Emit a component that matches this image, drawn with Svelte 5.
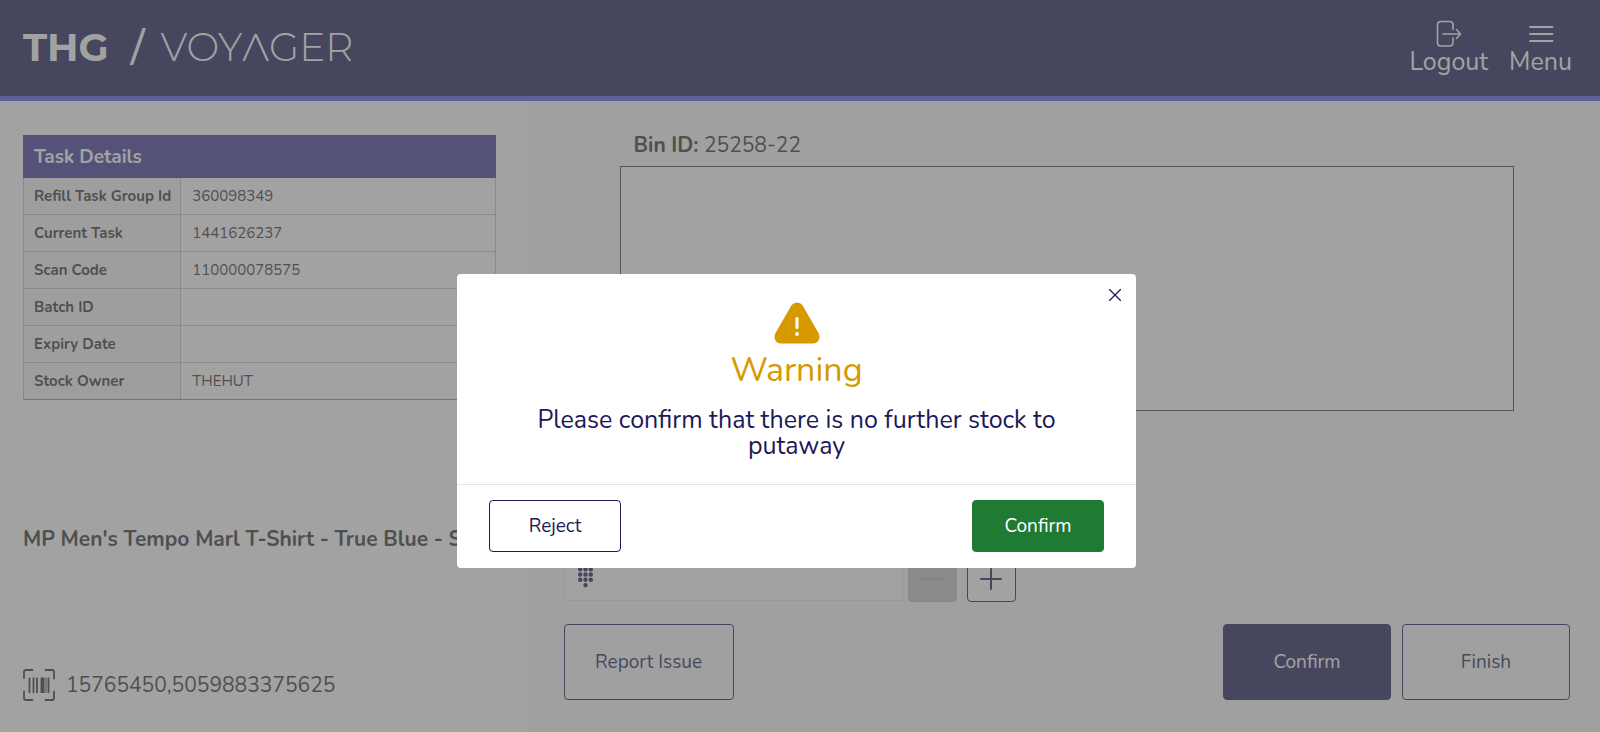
<script lang="ts">
  type Detail = { label: string; value: string };

  const details: Detail[] = [
    { label: 'Refill Task Group Id', value: '360098349' },
    { label: 'Current Task', value: '1441626237' },
    { label: 'Scan Code', value: '110000078575' },
    { label: 'Batch ID', value: '' },
    { label: 'Expiry Date', value: '' },
    { label: 'Stock Owner', value: 'THEHUT' }
  ];

  const binId = '25258-22';
  let quantity = $state('');
  let showWarning = $state(true);

  const keypadDots = [0, 1, 2, 3].flatMap(row => [0, 1, 2].map(col => ({ x: 2.2 + col * 5.3, y: 2.2 + row * 5.3, row, col })));

  function step(by: number) {
    quantity = String(Math.max(0, Number(quantity) + by));
  }

  function closeWarning() {
    showWarning = false;
  }
</script>

<div class="page">
  <header>
    <a class="logo" href="/" aria-label="THG / Voyager">
      <span class="brand">THG</span>
      <span class="slash">/</span>
      <span class="product">VOYΛGER</span>
    </a>
    <nav>
      <button class="nav-item">
        <svg width="26" height="28" viewBox="0 0 26 28" fill="none" stroke="currentColor" stroke-width="1.6" stroke-linecap="round" stroke-linejoin="round">
          <path d="M17 9.500V5Q17 1.500 13.500 1.500H5Q1.500 1.500 1.500 5V22.500Q1.500 26 5 26H13.500Q17 26 17 22.500V18" />
          <path d="M7 14H24.500M20.500 9.500L24.500 14L20.500 18.500" />
        </svg>
        Logout
      </button>
      <button class="nav-item">
        <svg width="26" height="28" viewBox="0 0 26 28" fill="none" stroke="currentColor" stroke-width="1.800" stroke-linecap="round">
          <path d="M2 7H24.500M2 14H24.500M2 21H24.500" />
        </svg>
        Menu
      </button>
    </nav>
  </header>

  <main>
    <section class="left">
      <table>
        <thead>
          <tr><th colspan="2">Task Details</th></tr>
        </thead>
        <tbody>
          {#each details as { label, value }}
            <tr>
              <th scope="row">{label}</th>
              <td>{value}</td>
            </tr>
          {/each}
        </tbody>
      </table>

      <h2>MP Men's Tempo Marl T-Shirt - True Blue - S</h2>

      <div class="barcode">
        <svg width="32" height="32" viewBox="0 0 32 32" fill="none" stroke="currentColor">
          <path stroke-width="1.800" stroke-linecap="round" stroke-linejoin="round" d="M1 9V3Q1 1 3 1H9.500M22.500 1H29Q31 1 31 3V9.500M31 22.500V29Q31 31 29 31H22.500M9.500 31H3Q1 31 1 29V22.500" />
          <path stroke-width="1.800" d="M6.500 8.500V24M10.500 8.500V24M14 8.500V24M25.500 8.500V24" />
          <path stroke-width="4" d="M19.500 8.500V24" />
          <path stroke-width="1" d="M23 8.500V24" />
        </svg>
        <span>15765450,5059883375625</span>
      </div>
    </section>

    <section class="right">
      <div class="bin">
        <p><b>Bin ID:</b> {binId}</p>
        <div class="bin-box"></div>
      </div>

      <div class="quantity">
        <label class="field">
          <svg width="16" height="21" viewBox="0 0 16 21" fill="currentColor">
            {#each keypadDots as dot}
              {#if dot.row < 3 || dot.col === 1}
                <circle cx={dot.x} cy={dot.y} r="2.200" />
              {/if}
            {/each}
          </svg>
          <input aria-label="Quantity" bind:value={quantity} />
        </label>
        <button class="step" aria-label="Decrease" disabled onclick={() => step(-1)}>
          <svg width="22" height="22" viewBox="0 0 22 22" stroke="currentColor" stroke-width="1.500" stroke-linecap="round"><path d="M1 11H21" /></svg>
        </button>
        <button class="step plus" aria-label="Increase" onclick={() => step(1)}>
          <svg width="22" height="22" viewBox="0 0 22 22" stroke="currentColor" stroke-width="2" stroke-linecap="round"><path d="M1 11H21M11 1V21" /></svg>
        </button>
      </div>

      <div class="actions">
        <button class="btn report">Report Issue</button>
        <button class="btn primary">Confirm</button>
        <button class="btn">Finish</button>
      </div>
    </section>
  </main>
</div>

{#if showWarning}
  <div class="overlay">
    <div class="modal" role="dialog" aria-modal="true" aria-labelledby="warning-title">
      <button class="close" aria-label="Close" onclick={closeWarning}>
        <svg width="12" height="12" viewBox="0 0 12 12" stroke="currentColor" stroke-width="1.300" stroke-linecap="round"><path d="M0.500 0.500L11.500 11.500M11.500 0.500L0.500 11.500" /></svg>
      </button>
      <div class="modal-body">
        <svg class="warning-icon" width="46" height="42" viewBox="0 0 46 42">
          <path fill="currentColor" d="M17.500 3.200Q19.500 0.500 23 0.500Q26.500 0.500 28.500 3.200L44.500 31Q46.500 35 44.500 38.500Q42.800 41.500 39 41.500H7Q3.200 41.500 1.500 38.500Q-0.500 35 1.500 31Z" />
          <path stroke="#fff" stroke-width="3" stroke-linecap="round" d="M23 16.500V25.500" />
          <circle cx="23" cy="32" r="1.900" fill="#fff" />
        </svg>
        <h1 id="warning-title">Warning</h1>
        <p>Please confirm that there is no further stock to putaway</p>
      </div>
      <div class="modal-footer">
        <button class="modal-btn" onclick={closeWarning}>Reject</button>
        <button class="modal-btn confirm" onclick={closeWarning}>Confirm</button>
      </div>
    </div>
  </div>
{/if}

<style>
  :global(body) {
    margin: 0;
    background: #fff;
  }

  .page, .overlay {
    font-family: Nunito, "Open Sans", "Noto Sans", sans-serif;
    color: #303134;
  }

  .page {
    min-height: 100vh;
    display: flex;
    flex-direction: column;
  }

  .page *, .overlay, .overlay * {
    box-sizing: border-box;
  }

  button {
    font: inherit;
    cursor: pointer;
  }

  svg {
    display: block;
    flex: none;
  }

  h1, h2, p {
    margin: 0;
  }

  header {
    display: flex;
    align-items: center;
    justify-content: space-between;
    height: 101px;
    padding: 0 28px 0 23px;
    background: #1b1958;
    border-bottom: 5px solid #535fe1;
    color: #fff;
  }

  .logo {
    display: flex;
    align-items: center;
    gap: 16px;
    color: inherit;
    text-decoration: none;
    font-family: Montserrat, Inter, sans-serif;
    font-size: 39px;
    line-height: 44px;
    padding-bottom: 2px;
  }

  .brand {
    margin-right: 6px;
    font-weight: 700;
  }

  .slash {
    font-weight: 500;
  }

  .product {
    font-weight: 300;
  }

  nav {
    display: flex;
    gap: 21px;
  }

  .nav-item {
    display: flex;
    flex-direction: column;
    align-items: center;
    padding: 0;
    border: 0;
    background: none;
    color: inherit;
    font-size: 25px;
    line-height: 28px;
  }

  main {
    flex: 1;
    display: grid;
    grid-template-columns: 33.1% 1fr;
  }

  .left {
    padding: 34px 34px 32px 23px;
  }

  table {
    width: 100%;
    border-collapse: collapse;
    border: 1px solid #8a8a8a;
    font-size: 15px;
  }

  th, td {
    height: 37px;
    padding: 0 11px 1px;
    border: 1px solid #c4c4c4;
    text-align: left;
  }

  thead th {
    height: 42px;
    padding: 0 10px;
    border: 1px solid #3c399a;
    background: #3c399a;
    color: #fff;
    font-size: 19px;
  }

  tbody th {
    width: 156px;
    padding: 0 9px 1px 10px;
    background: #f5f5f5;
    font-weight: 700;
    white-space: nowrap;
  }

  tbody tr:last-child > * {
    border-bottom-color: #8a8a8a;
  }

  h2 {
    margin-top: 124px;
    font-size: 21px;
    line-height: 30px;
    font-weight: 700;
    white-space: nowrap;
  }

  .barcode {
    display: flex;
    align-items: center;
    gap: 11px;
    margin-top: 115px;
    font-size: 21px;
    line-height: 32px;
  }

  .right {
    padding: 29px 30px 32px 34px;
    background: #f9f9f9;
  }

  .bin {
    margin: 0 56px;
  }

  .bin p {
    padding-left: 14px;
    font-size: 21px;
    line-height: 30px;
  }

  .bin-box {
    height: 245px;
    margin-top: 6px;
    border: 1px solid #404040;
    background: #fff;
  }

  .quantity {
    display: flex;
    margin-top: 139px;
  }

  .field {
    display: flex;
    align-items: center;
    width: 339px;
    height: 51px;
    padding: 4px 0 0 13px;
    border: 1px solid #e6e6e6;
    background: #fff;
    color: #1b1958;
  }

  input {
    flex: 1;
    min-width: 0;
    margin-left: 12px;
    border: 0;
    outline: 0;
    background: none;
    font: inherit;
    font-size: 19px;
  }

  .step {
    display: grid;
    place-items: center;
    width: 49px;
    height: 52px;
    margin-left: 5px;
    padding: 6px 0 0;
    border: 0;
    border-radius: 4px;
    background: #c4c4c4;
    color: #a9a9a9;
  }

  .plus {
    margin-left: 10px;
    border: 1px solid #1b1958;
    background: #fff;
    color: #1b1958;
  }

  .actions {
    display: flex;
    gap: 11px;
    margin-top: 22px;
  }

  .btn, .modal-btn {
    border: 1px solid #1b1958;
    border-radius: 4px;
    background: #fff;
    color: #1b1958;
    font-size: 19px;
  }

  .btn {
    width: 168px;
    height: 76px;
    background: none;
  }

  .report {
    width: 170px;
    margin-right: auto;
  }

  .primary {
    background: #1b1958;
    color: #fff;
  }

  .overlay {
    position: fixed;
    inset: 0;
    display: flex;
    align-items: flex-start;
    justify-content: center;
    padding: 274px 7px 0 0;
    background: rgba(100, 100, 100, 0.6);
  }

  .modal {
    position: relative;
    width: 679px;
    max-width: 100%;
    border-radius: 4px;
    background: #fff;
    color: #1b1958;
  }

  .close {
    position: absolute;
    top: 9px;
    right: 9px;
    padding: 6px;
    border: 0;
    background: none;
    color: inherit;
  }

  .modal-body {
    display: flex;
    flex-direction: column;
    align-items: center;
    padding: 28px 32px 25px;
    border-bottom: 1px solid #e4e4e4;
    text-align: center;
  }

  .warning-icon, h1 {
    color: #d79900;
  }

  h1 {
    margin-top: 4px;
    font-size: 34px;
    line-height: 44px;
    font-weight: 400;
  }

  .modal-body p {
    margin-top: 15px;
    font-size: 25px;
    line-height: 26px;
  }

  .modal-footer {
    display: flex;
    justify-content: space-between;
    padding: 15px 32px 16px;
  }

  .modal-btn {
    width: 132px;
    height: 52px;
  }

  .modal-btn.confirm {
    border-color: #1f7a33;
    background: #1f7a33;
    color: #fff;
  }
</style>
